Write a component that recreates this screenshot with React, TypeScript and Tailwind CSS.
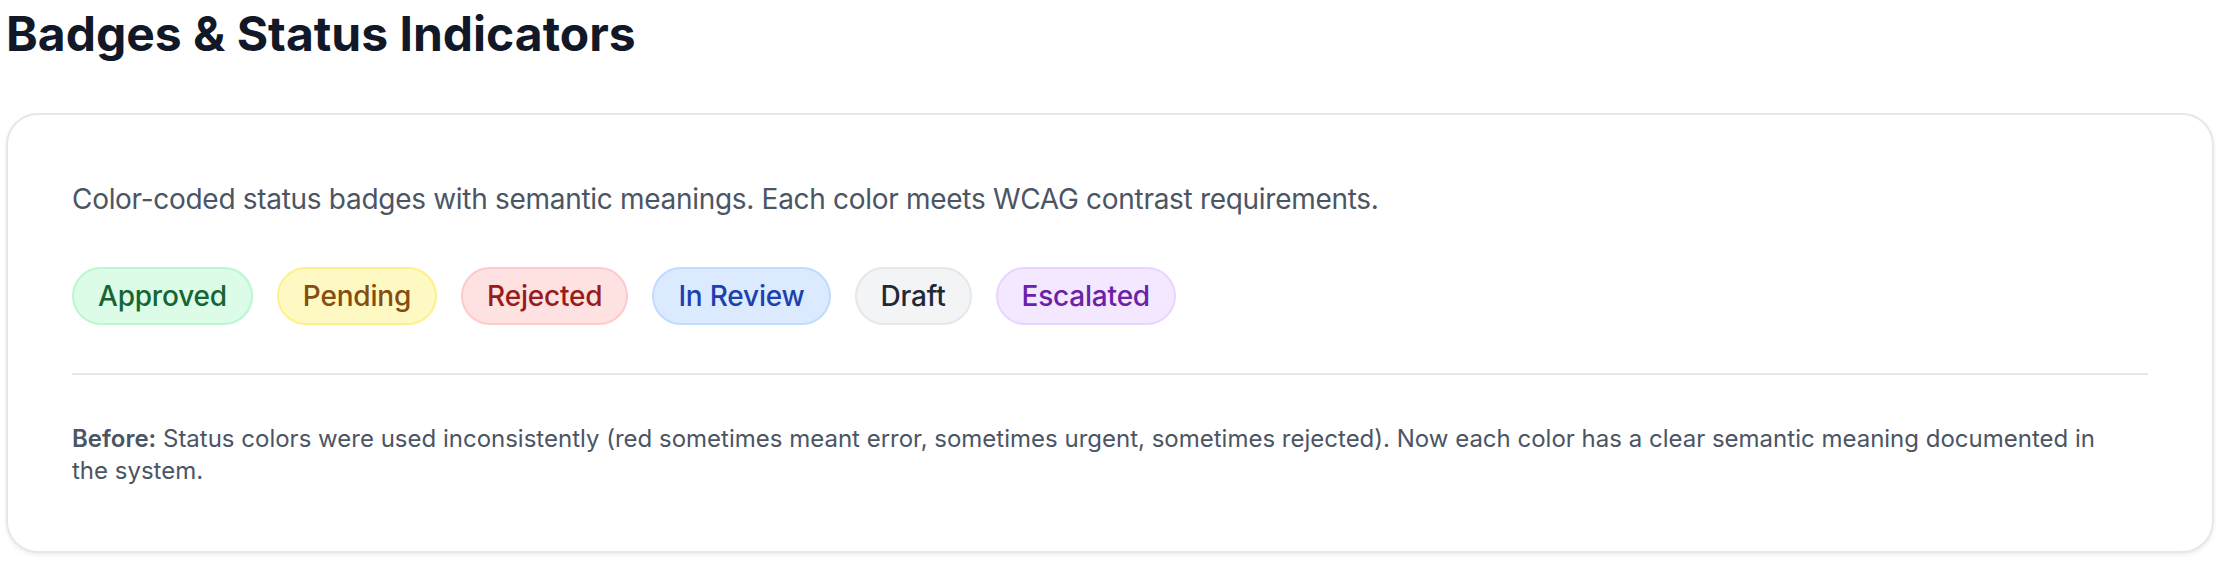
const BADGES = [
  { label: 'Approved', cls: 'bg-[#dcfce7] border-[#bbf7d0] text-[#166534]' },
  { label: 'Pending', cls: 'bg-[#fef9c3] border-[#fef08a] text-[#854d0e]' },
  { label: 'Rejected', cls: 'bg-[#fee2e2] border-[#fecaca] text-[#991b1b]' },
  { label: 'In Review', cls: 'bg-[#dbeafe] border-[#bfdbfe] text-[#1e40af]' },
  { label: 'Draft', cls: 'bg-[#f3f4f6] border-[#e5e7eb] text-[#1f2937]' },
  { label: 'Escalated', cls: 'bg-[#f3e8ff] border-[#e9d5ff] text-[#6b21a8]' },
];

export default function App() {
  return (
    <main
      className="min-h-screen bg-white px-[6px] pt-[2px]"
      style={{ fontFamily: 'Inter, "Noto Sans", sans-serif' }}
    >
      {/* Heading */}
      <h1 className="text-[48px] leading-[64px] font-bold text-[#111827] mb-[47px]">
        Badges &amp; Status Indicators
      </h1>

      {/* Card */}
      <section className="rounded-[32px] border-2 border-[#e5e7eb] bg-white p-[64px] shadow-[0_2px_4px_rgba(0,0,0,0.07)]">
        <p className="text-[28px] leading-[40px] tracking-[-0.3px] text-[#4b5563] mb-[48px]">
          Color-coded status badges with semantic meanings. Each color meets WCAG contrast requirements.
        </p>

        {/* Badges */}
        <div className="flex flex-wrap items-center gap-[24px]">
          {BADGES.map((b) => (
            <span
              key={b.label}
              className={`inline-flex items-center rounded-full border-2 px-[24px] py-[7px] text-[28px] leading-[40px] tracking-[-0.2px] font-medium ${b.cls}`}
            >
              {b.label}
            </span>
          ))}
        </div>

        {/* Note */}
        <div className="mt-[48px] border-t-2 border-[#e5e7eb] pt-[48px]">
          <p className="max-w-[2040px] text-[24px] leading-[32px] text-[#4b5563]">
            <strong className="font-semibold">Before:</strong> Status colors were used inconsistently (red sometimes meant error, sometimes urgent, sometimes rejected). Now each color has a clear semantic meaning documented in the system.
          </p>
        </div>
      </section>
    </main>
  );
}
